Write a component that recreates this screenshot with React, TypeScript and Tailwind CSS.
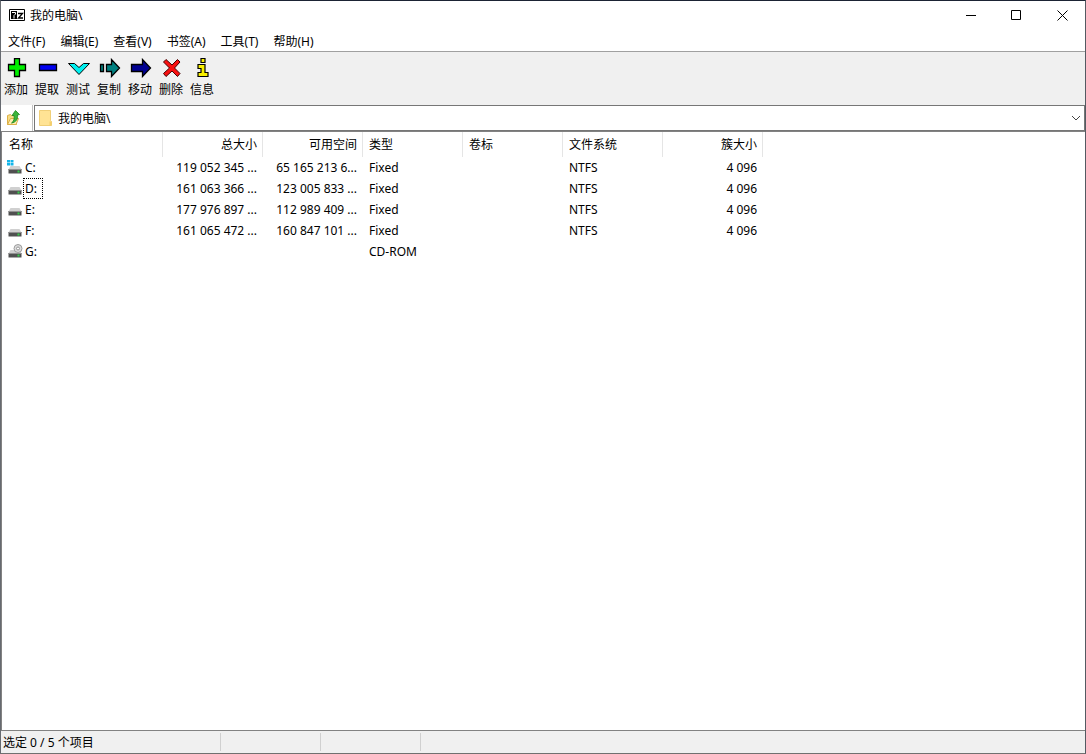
import { useState } from "react";

const menus = ["文件(F)", "编辑(E)", "查看(V)", "书签(A)", "工具(T)", "帮助(H)"];

const tools = [
  {
    label: "添加",
    icon: <path d="M9.5 .5h5v6h6v6h-6v6h-5v-6h-6v-6h6z" fill="#00f000" stroke="#000" strokeWidth="1.3" />,
  },
  {
    label: "提取",
    icon: <path d="M3.5 6.5h17v6h-17z" fill="#0000f0" stroke="#000" strokeWidth="1.3" />,
  },
  {
    label: "测试",
    icon: <path d="M1.5 5.5h6l4.5 4 4.5-4h6l-10.5 11z" fill="#00f0f0" stroke="#000" />,
  },
  {
    label: "复制",
    icon: (
      <path
        d="M2.5 6.5h3v7h-3zM8.5 6.5h5v-5l8 8.5-8 8.5v-5h-5z"
        fill="#008080"
        stroke="#000"
        strokeWidth="1.3"
      />
    ),
  },
  {
    label: "移动",
    icon: <path d="M2.5 6.5h11v-5l8 8.5-8 8.5v-5h-11z" fill="#000090" stroke="#000" strokeWidth="1.3" />,
  },
  {
    label: "删除",
    icon: (
      <path
        d="M6 1.5l6 5.5 5.5-5.5 2.5 2.5-5.5 6 5.5 5.5-2.5 3-5.5-5.5-6 5.5-2.5-3 6-5.5-6-6z"
        fill="#f81010"
        stroke="#400"
      />
    ),
  },
  {
    label: "信息",
    icon: (
      <path
        d="M10 .5h4v4h-4zM7 6.5h7v8h3v4h-10v-4h3v-4h-3z"
        fill="#f8f000"
        stroke="#000"
        strokeWidth="1.2"
      />
    ),
  },
];

const columns = [
  { name: "总大小", right: true },
  { name: "可用空间", right: true },
  { name: "类型", right: false },
  { name: "卷标", right: false },
  { name: "文件系统", right: false },
  { name: "簇大小", right: true },
];

const drives = [
  { name: "C:", kind: "system", cells: ["119 052 345 ...", "65 165 213 6...", "Fixed", "", "NTFS", "4 096"] },
  { name: "D:", kind: "disk", cells: ["161 063 366 ...", "123 005 833 ...", "Fixed", "", "NTFS", "4 096"] },
  { name: "E:", kind: "disk", cells: ["177 976 897 ...", "112 989 409 ...", "Fixed", "", "NTFS", "4 096"] },
  { name: "F:", kind: "disk", cells: ["161 065 472 ...", "160 847 101 ...", "Fixed", "", "NTFS", "4 096"] },
  { name: "G:", kind: "cdrom", cells: ["", "", "CD-ROM", "", "", ""] },
];

const DriveIcon = ({ kind }: { kind: string }) => (
  <svg className="h-4 w-4 shrink-0" viewBox="0 0 16 16" aria-hidden="true">
    <path d="M3.5 6h9l2 3.5h-13z" fill="#d0d0d0" />
    <path d="M1.5 9h13v4.5h-13z" fill="#505050" />
    <path d="M1.5 9.5h13" stroke="#909090" />
    <path d="M10.5 10.5h2v2h-2z" fill="#35d04a" />
    {kind === "system" && (
      <path d="M0 0h3v2.5h-3zM3.5 0h3v2.5h-3zM0 3h3v2.5h-3zM3.5 3h3v2.5h-3z" fill="#12b5ea" />
    )}
    {kind === "cdrom" && (
      <>
        <circle cx="11" cy="4.5" r="4" fill="#dcdcdc" stroke="#9c9c9c" />
        <circle cx="11" cy="4.5" r="1.5" fill="#fff" stroke="#969696" />
      </>
    )}
  </svg>
);

const TitleBar = () => (
  <header className="flex h-[29px] shrink-0 items-center bg-white pl-2">
    <svg className="h-4 w-4" viewBox="0 0 16 16" aria-hidden="true">
      <path d="M.5 1.5h15v11h-15z" fill="#fff" stroke="#000" />
      <path d="M2 3h6v8h-6z" />
      <path d="M3 4.5h3.5v1.5l-1.5 1.5v3" fill="none" stroke="#fff" />
      <path d="M9 5.5h4.5l-4 4.5h4.5" fill="none" stroke="#000" strokeWidth="1.3" />
    </svg>
    <h1 className="ml-[5px] grow">我的电脑\</h1>
    <button className="flex h-full w-[45px] items-center justify-center" aria-label="最小化">
      <svg className="h-[11px] w-[11px]" viewBox="0 0 11 11">
        <path d="M0 5.5h10" stroke="#000" />
      </svg>
    </button>
    <button className="flex h-full w-[45px] items-center justify-center" aria-label="最大化">
      <svg className="h-[11px] w-[11px]" viewBox="0 0 11 11">
        <path d="M.5 .5h9v9h-9z" fill="none" stroke="#000" />
      </svg>
    </button>
    <button className="flex h-full w-[46px] items-center justify-center" aria-label="关闭">
      <svg className="h-[11px] w-[11px]" viewBox="0 0 11 11">
        <path d="M.5 .5l10 10M10.5 .5l-10 10" stroke="#000" />
      </svg>
    </button>
  </header>
);

const AddressBar = () => {
  const [path, setPath] = useState("root");

  return (
    <div className="flex h-[26px] shrink-0 bg-white">
      <button className="flex w-8 items-center border-r border-[#c0c0c0] pl-[5px]" aria-label="向上">
        <svg className="h-4 w-4" viewBox="0 0 16 16">
          <path d="M1.5 5.5l3-1 1 1h5v9h-9z" fill="#f7dc84" stroke="#dcb046" />
          <path d="M1.5 14.5l3-6h8l-2.5 6z" fill="#ffeeb0" stroke="#dcb046" />
          <path
            d="M5.5 13c2.5-1.5 3-4.5 2.5-7.500h-2l3.5-5 4 4-2 .5c.5 4-1.5 7.500-6 8z"
            fill="#3cb53c"
            stroke="#1c861c"
            strokeWidth=".8"
          />
        </svg>
      </button>
      <div className="relative ml-px grow border border-[#767676]">
        <select
          className="h-full w-full appearance-none bg-white pt-0.5 pl-[23px] outline-none"
          aria-label="路径"
          value={path}
          onChange={(e) => setPath(e.target.value)}
        >
          <option value="root">我的电脑\</option>
        </select>
        <svg
          className="pointer-events-none absolute top-1 left-1 h-4 w-4"
          viewBox="0 0 16 16"
          aria-hidden="true"
        >
          <path d="M.5 .5h11v10l1 1v4h-12z" fill="#ffe394" stroke="#f0cf78" />
          <path d="M10.5 11.5h2v4h-2z" fill="#f5cf6b" />
        </svg>
        <svg
          className="pointer-events-none absolute top-2 right-1 h-2 w-2"
          viewBox="0 0 8 8"
          aria-hidden="true"
        >
          <path d="M0 2l4 4 4-4" fill="none" stroke="#444" />
        </svg>
      </div>
    </div>
  );
};

const DriveTable = () => {
  const [focused, setFocused] = useState("D:");

  return (
    <table className="w-[761px] table-fixed border-separate border-spacing-0">
      <thead>
        <tr className="h-[25px]">
          <th className="w-[161px] border-r border-[#e5e5e5] pl-[7px] text-left font-normal">名称</th>
          {columns.map((column) => (
            <th
              key={column.name}
              className={`w-[100px] border-r border-[#e5e5e5] pr-[5px] pl-1.5 font-normal ${
                column.right ? "text-right" : "text-left"
              }`}
            >
              {column.name}
            </th>
          ))}
        </tr>
      </thead>
      <tbody>
        {drives.map((drive) => (
          <tr key={drive.name} className="h-[21px]" onClick={() => setFocused(drive.name)}>
            <td className="p-0 pl-[5px]">
              <div className="flex h-[21px] items-center">
                <DriveIcon kind={drive.kind} />
                <span
                  className={`flex h-full items-center border border-dotted pr-[5px] pl-px ${
                    focused === drive.name ? "border-black" : "border-transparent"
                  }`}
                >
                  {drive.name}
                </span>
              </div>
            </td>
            {drive.cells.map((cell, index) => (
              <td
                key={index}
                className={`p-0 pr-1.5 pl-1.5 whitespace-nowrap ${
                  columns[index].right ? "text-right" : "text-left"
                }`}
              >
                {cell}
              </td>
            ))}
          </tr>
        ))}
      </tbody>
    </table>
  );
};

export default function App() {
  return (
    <div className="flex h-screen flex-col border border-t-[#1b2334] border-r-[#555a62] border-b-[#707070] border-l-[#666a70] bg-[#f0f0f0] font-['Noto_Sans','Noto_Sans_CJK_SC',sans-serif] text-[12px] leading-4 text-black">
      <TitleBar />
      <nav className="flex h-[22px] shrink-0 items-center gap-[15px] border-b border-[#a0a0a0] bg-white pt-0.5 pl-[7px]">
        {menus.map((menu) => (
          <button key={menu}>{menu}</button>
        ))}
      </nav>
      <div className="flex h-[53px] shrink-0 items-start pt-1.5">
        {tools.map((tool) => (
          <button key={tool.label} className="flex w-[31px] flex-col items-start gap-1 pl-[3px]">
            <svg className="h-5 w-6" viewBox="-1 0 24 20" aria-hidden="true">
              {tool.icon}
            </svg>
            <span>{tool.label}</span>
          </button>
        ))}
      </div>
      <AddressBar />
      <main className="grow overflow-auto border-t border-b border-l border-[#828282] bg-white">
        <DriveTable />
      </main>
      <footer className="flex h-[22px] shrink-0 items-stretch py-0.5">
        <span className="flex w-[220px] items-center border-r border-[#d0d0d0] pt-0.5 pl-0.5">选定 0 / 5 个项目</span>
        <span className="w-[100px] border-r border-[#d0d0d0]" />
        <span className="w-[100px] border-r border-[#d0d0d0]" />
      </footer>
    </div>
  );
}
